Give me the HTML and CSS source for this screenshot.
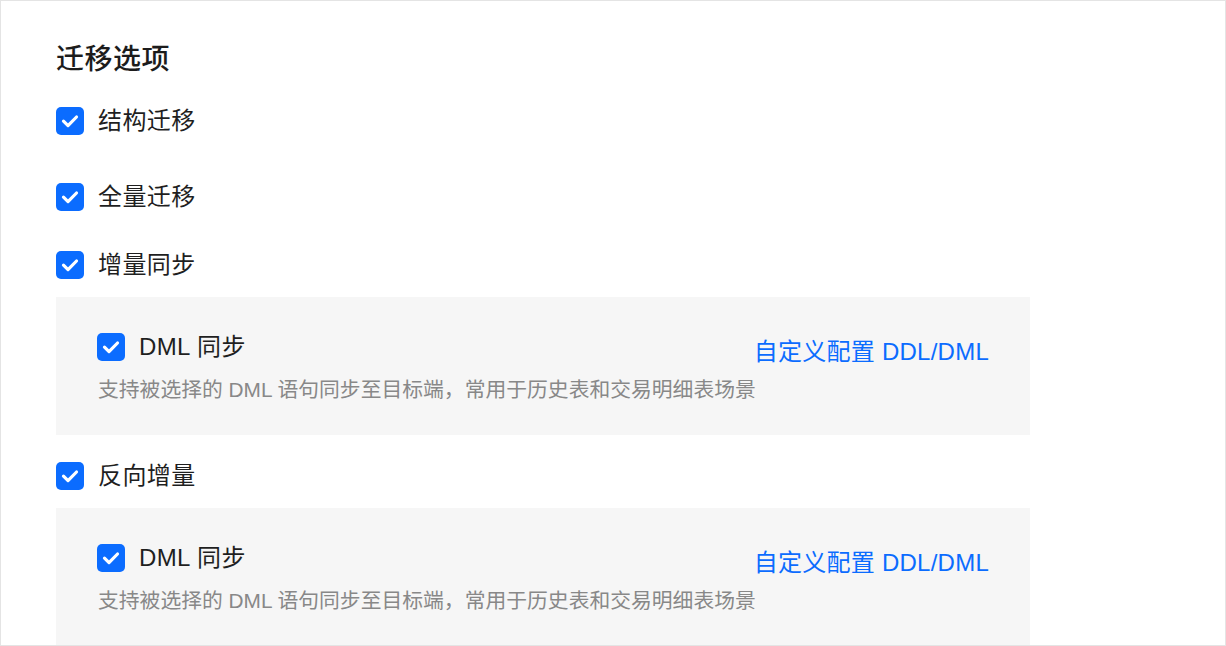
FILE: index.html
```html
<!DOCTYPE html>
<html lang="zh-CN">
<head>
<meta charset="utf-8">
<title>迁移选项</title>
<link rel="stylesheet" href="styles.css">
</head>
<body>
<div class="frame">
  <h2 class="title">迁移选项</h2>

  <label class="opt opt-first">
    <span class="cb"><svg viewBox="0 0 28 28" width="28" height="28"><rect width="28" height="28" rx="5" fill="#0b6cff"/><path d="M7.5 14.2 L12 18.6 L20.5 10" fill="none" stroke="#fff" stroke-width="3.2" stroke-linecap="round" stroke-linejoin="round"/></svg></span>
    <span class="opt-label">结构迁移</span>
  </label>

  <label class="opt opt-second">
    <span class="cb"><svg viewBox="0 0 28 28" width="28" height="28"><rect width="28" height="28" rx="5" fill="#0b6cff"/><path d="M7.5 14.2 L12 18.6 L20.5 10" fill="none" stroke="#fff" stroke-width="3.2" stroke-linecap="round" stroke-linejoin="round"/></svg></span>
    <span class="opt-label">全量迁移</span>
  </label>

  <label class="opt opt-third">
    <span class="cb"><svg viewBox="0 0 28 28" width="28" height="28"><rect width="28" height="28" rx="5" fill="#0b6cff"/><path d="M7.5 14.2 L12 18.6 L20.5 10" fill="none" stroke="#fff" stroke-width="3.2" stroke-linecap="round" stroke-linejoin="round"/></svg></span>
    <span class="opt-label">增量同步</span>
  </label>

  <div class="panel">
    <div class="panel-row">
      <label class="opt">
        <span class="cb"><svg viewBox="0 0 28 28" width="28" height="28"><rect width="28" height="28" rx="5" fill="#0b6cff"/><path d="M7.5 14.2 L12 18.6 L20.5 10" fill="none" stroke="#fff" stroke-width="3.2" stroke-linecap="round" stroke-linejoin="round"/></svg></span>
        <span class="opt-label">DML 同步</span>
      </label>
      <a class="link" href="#">自定义配置 DDL/DML</a>
    </div>
    <p class="desc">支持被选择的 DML 语句同步至目标端，常用于历史表和交易明细表场景</p>
  </div>

  <label class="opt opt-fourth">
    <span class="cb"><svg viewBox="0 0 28 28" width="28" height="28"><rect width="28" height="28" rx="5" fill="#0b6cff"/><path d="M7.5 14.2 L12 18.6 L20.5 10" fill="none" stroke="#fff" stroke-width="3.2" stroke-linecap="round" stroke-linejoin="round"/></svg></span>
    <span class="opt-label">反向增量</span>
  </label>

  <div class="panel">
    <div class="panel-row">
      <label class="opt">
        <span class="cb"><svg viewBox="0 0 28 28" width="28" height="28"><rect width="28" height="28" rx="5" fill="#0b6cff"/><path d="M7.5 14.2 L12 18.6 L20.5 10" fill="none" stroke="#fff" stroke-width="3.2" stroke-linecap="round" stroke-linejoin="round"/></svg></span>
        <span class="opt-label">DML 同步</span>
      </label>
      <a class="link" href="#">自定义配置 DDL/DML</a>
    </div>
    <p class="desc">支持被选择的 DML 语句同步至目标端，常用于历史表和交易明细表场景</p>
  </div>
</div>
</body>
</html>
```

FILE: styles.css
```css
* {
  box-sizing: border-box;
}

html, body {
  margin: 0;
  padding: 0;
  background: #ffffff;
}

body {
  font-family: "Liberation Sans", "Noto Sans CJK SC", sans-serif;
  color: #1f1f1f;
}

.frame {
  width: 1226px;
  height: 646px;
  border: 1px solid #e4e4e4;
  overflow: hidden;
  padding: 38px 0 0 55px;
  display: flex;
  flex-direction: column;
  align-items: flex-start;
}

.title {
  margin: 0;
  font-size: 28px;
  line-height: 36px;
  font-weight: 500;
  letter-spacing: 0.5px;
  color: #1c1c1c;
  font-family: "Noto Sans CJK SC", sans-serif;
}

.opt {
  display: flex;
  align-items: center;
  gap: 14px;
  height: 28px;
  cursor: pointer;
}

.opt-first {
  margin-top: 32px;
}

.opt-second {
  margin-top: 48px;
}

.opt-third {
  margin-top: 40px;
}

.opt-fourth {
  margin-top: 27px;
}

.cb {
  width: 28px;
  height: 28px;
  flex: none;
  display: block;
}

.cb svg {
  display: block;
}

.opt-label {
  font-size: 24px;
  line-height: 28px;
  letter-spacing: 0.4px;
  color: #1f1f1f;
}

.panel {
  width: 974px;
  margin-top: 18px;
  background: #f6f6f6;
  padding: 36px 41px 31px 41px;
  flex: none;
}

.panel-row {
  display: flex;
  align-items: center;
  justify-content: space-between;
  height: 28px;
}

.link {
  font-size: 24px;
  line-height: 28px;
  letter-spacing: 0.25px;
  color: #0b6cff;
  text-decoration: none;
  padding-top: 10px;
}

.desc {
  margin: 15px 0 0 1px;
  font-size: 20.8px;
  line-height: 28px;
  color: #888888;
}
```
